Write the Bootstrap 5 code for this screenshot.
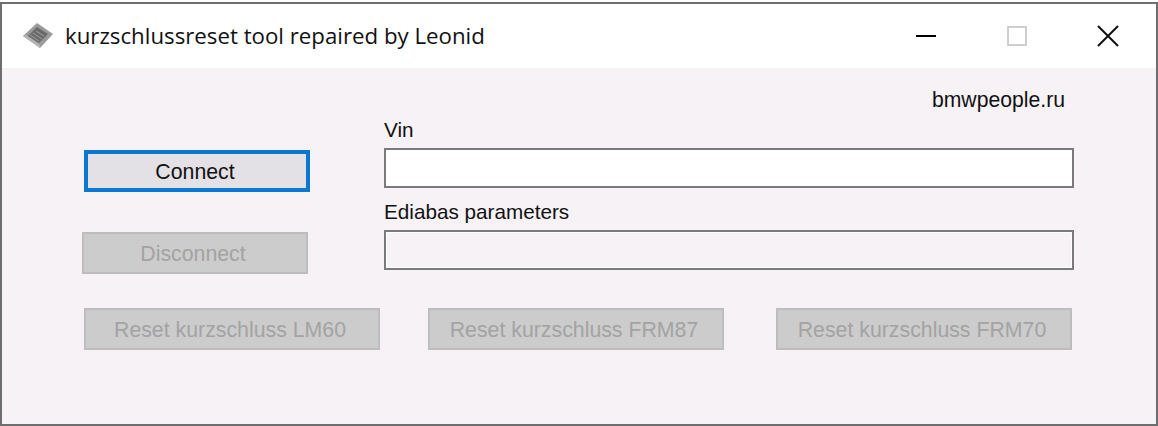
<!DOCTYPE html>
<html>
<head>
  <title>kurzschlussreset tool repaired by Leonid</title>
  <link href="https://cdn.jsdelivr.net/npm/bootstrap@5.3.2/dist/css/bootstrap.min.css" rel="stylesheet">
  <style>
    html, body { height: 100%; background: #fff; }
    body { font-family: "Liberation Sans", Arial, sans-serif; overflow: hidden; }
    .app-window {
      height: 424px;
      margin-top: 2px;
      border: 2px solid #6e6e6e;
      background: #f6f2f6;
    }
    .app-title {
      height: 64px;
      background: #fff;
      padding-left: 20px;
      font-family: "Open Sans", sans-serif;
      font-size: 22.25px;
      color: #111;
    }
    .app-title svg.app-icon { margin-right: 11px; }
    .win-btns { width: 226px; }
    .win-min { width: 22px; height: 30px; margin-left: -15px; margin-right: 69px; }
    .win-max { width: 22px; height: 30px; margin-right: 69px; }
    .win-close { width: 22px; height: 30px; }
    .client { height: 356px; }
    .site-text { height: 50px; padding: 20px 91px 0 0; font-size: 21.2px; line-height: 24px; color: #111; text-align: right; }
    .top-area { padding-left: 80px; }
    .btn-col { width: 302px; padding-top: 32px; }
    .win-button {
      display: block;
      height: 42px;
      padding: 4px 4px 0 0;
      font-size: 21.3px;
      line-height: 1;
      background: #cccccc;
      border: 2px solid #bdbdbd;
      color: #a3a3a3;
      border-radius: 0;
    }
    .win-button.is-focus {
      width: 226px;
      margin-left: 2px;
      background: #e3e1e6;
      border: 4px solid #0a78d0;
      color: #111;
    }
    .win-button.is-wide { width: 226px; margin-top: 40px; }
    .win-button.is-reset { width: 296px; }
    .field-col { width: 690px; }
    .field-label { font-size: 20.7px; line-height: 24px; height: 30px; margin: 0; color: #111; display: block; }
    .field-box {
      display: block;
      width: 690px;
      height: 40px;
      border: 2px solid #7a7a7a;
      background: #fff;
      border-radius: 0;
      padding: 0;
      margin-bottom: 12px;
    }
    .field-box[disabled] { background: #f6f2f6; box-shadow: inset 0 0 0 1px #fff; }
    .reset-row { padding: 26px 0 0 82px; }
    .reset-gap-a { margin-right: 48px; }
    .reset-gap-b { margin-right: 52px; }
  </style>
</head>
<body>
<div class="app-window">
  <div class="app-title d-flex align-items-center">
    <svg class="app-icon" width="32" height="28" viewBox="0 0 32 28">
      <polygon points="15,1 31,12 18,26 1,14" fill="#9a9a9a"/>
      <polygon points="15,5 26,12 17,21 6,14" fill="#6a6a6a"/>
      <polygon points="1,14 18,26 18,23 4,13" fill="#b5b5b5"/>
      <path d="M8 13l9 6M11 11l9 6M14 9l8 5" stroke="#a0a0a0" stroke-width="1" fill="none"/>
    </svg>
    <span class="flex-grow-1">kurzschlussreset tool repaired by Leonid</span>
    <div class="win-btns d-flex align-items-center">
      <svg class="win-min" viewBox="0 0 22 30"><path d="M1 15h20" stroke="#000" stroke-width="2"/></svg>
      <svg class="win-max" viewBox="0 0 22 30"><rect x="2" y="6" width="18" height="18" fill="none" stroke="#cfcfcf" stroke-width="2"/></svg>
      <svg class="win-close" viewBox="0 0 22 30"><path d="M1 5l20 20M21 5l-20 20" stroke="#111" stroke-width="2"/></svg>
    </div>
  </div>
  <div class="client">
    <div class="site-text">bmwpeople.ru</div>
    <div class="top-area d-flex">
      <div class="btn-col">
        <button type="button" class="win-button is-focus">Connect</button>
        <button type="button" class="win-button is-wide" disabled>Disconnect</button>
      </div>
      <div class="field-col">
        <label class="field-label">Vin</label>
        <input class="field-box" type="text">
        <label class="field-label">Ediabas parameters</label>
        <input class="field-box" type="text" disabled>
      </div>
    </div>
    <div class="reset-row d-flex">
      <button type="button" class="win-button is-reset reset-gap-a" disabled>Reset kurzschluss LM60</button>
      <button type="button" class="win-button is-reset reset-gap-b" disabled>Reset kurzschluss FRM87</button>
      <button type="button" class="win-button is-reset" disabled>Reset kurzschluss FRM70</button>
    </div>
  </div>
</div>
</body>
</html>
